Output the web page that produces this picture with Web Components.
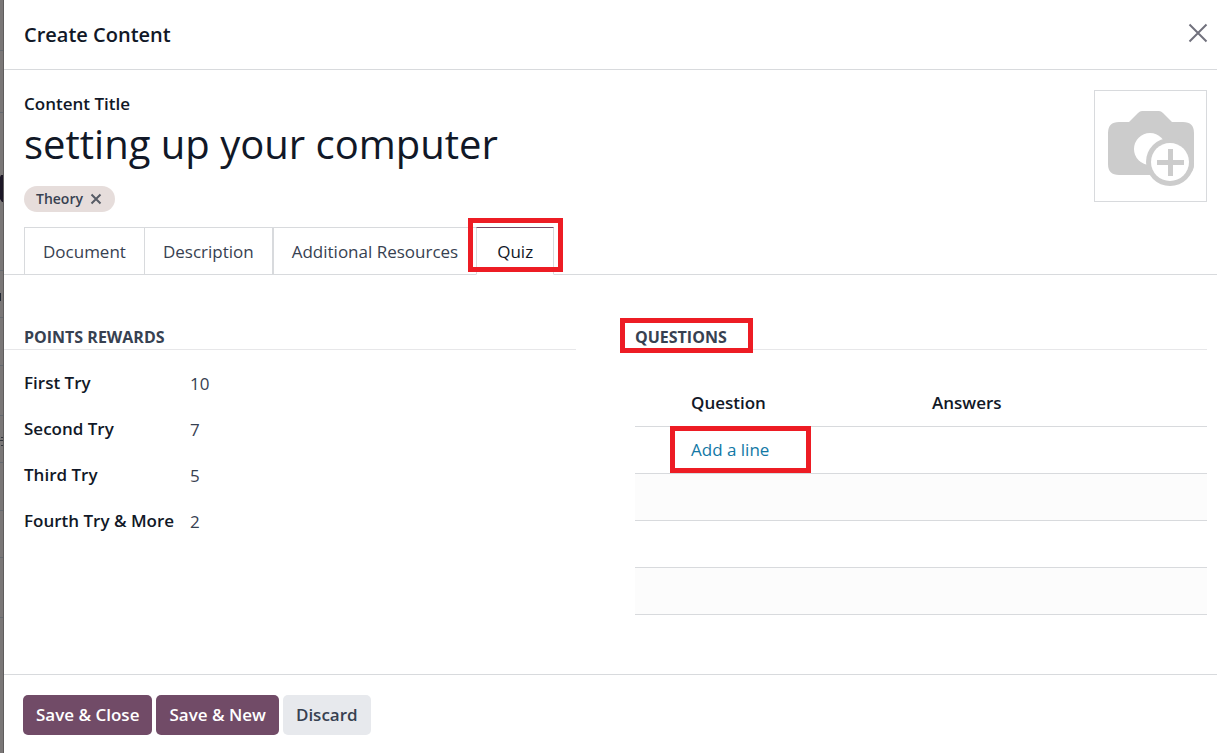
<!DOCTYPE html>
<html lang="en">
<head>
<meta charset="utf-8">
<meta name="viewport" content="width=device-width, initial-scale=1">
<title>Create Content</title>
<style>
  :root{
    --ink: #111827;
    --text: #374151;
    --line: #d8dadd;
    --brand: #714b67;
    --link: #1278a5;
    --mark: #ed1c24;
  }
  body{
    margin: 0;
    background-color: #7a7777;
    color: var(--text);
    font-family: "Open Sans", "Noto Sans", sans-serif;
    font-size: 17px;
    line-height: 24px;
  }
</style>
</head>
<body>
<page-backdrop></page-backdrop>
<content-dialog heading="Create Content">
  <content-summary></content-summary>
  <content-tabs></content-tabs>
  <field-group slot="groups" heading="Points Rewards" class="rewards">
    <score-field label="First Try" value="10"></score-field>
    <score-field label="Second Try" value="7"></score-field>
    <score-field label="Third Try" value="5"></score-field>
    <score-field label="Fourth Try &amp; More" value="2"></score-field>
  </field-group>
  <field-group slot="groups" heading="Questions" marked>
    <question-table></question-table>
  </field-group>
  <action-button slot="footer" primary>Save &amp; Close</action-button>
  <action-button slot="footer" primary>Save &amp; New</action-button>
  <action-button slot="footer">Discard</action-button>
</content-dialog>

<script>
// red frame drawn around whatever is slotted in
class MarkBox extends HTMLElement{
  constructor(){
    super();
    this.attachShadow({mode: 'open'});
  }
  static get styles(){
    return /* css */ `
      :host{
        display: inline-block;
        position: relative;
      }

      .frame{
        position: absolute;
        inset: var(--mark-inset, -8px);
        border: 5px solid var(--mark);
        pointer-events: none;
        z-index: 2;
      }
    `
  }
  connectedCallback(){
    this.shadowRoot.innerHTML = /* html */ `
    <style>${MarkBox.styles}</style>
    <slot></slot><div class="frame"></div>
    `
  }
}
customElements.define('mark-box', MarkBox);

// the dimmed page that shows at the left of the dialog
class PageBackdrop extends HTMLElement{
  constructor(){
    super();
    this.attachShadow({mode: 'open'});
  }
  static get styles(){
    return /* css */ `
      :host{
        position: absolute;
        top: 0;
        left: 0;
        width: 4px;
        height: 100%;
        overflow: hidden;
        background-color: #7a7777;
        border-right: 1px solid #5f5d5d;
        box-sizing: border-box;
      }

      svg{
        display: block;
      }
    `
  }
  connectedCallback(){
    this.shadowRoot.innerHTML = /* html */ `
    <style>${PageBackdrop.styles}</style>
    <svg width="4" height="753" viewBox="0 0 4 753" aria-hidden="true">
      <path d="M0 50.5h4M0 112.5h4M0 270.5h4M0 317.5h4M0 365.5h4M0 415.5h4M0 462.5h4M0 510.5h4M0 557.5h4M0 617.5h4" stroke="#656a70"/>
      <path d="M0 177l1-2h3v27h-2l-2-3z" fill="#1c1726"/>
      <path d="M0 293h1v8h-1zM3 294h1v2h-1zM3 299h1v2h-1z" fill="#232833"/>
      <path d="M0 440.5h3M1 437.5h2M1 445.5h3" stroke="#30343c"/>
    </svg>
    `
  }
}
customElements.define('page-backdrop', PageBackdrop);

class ContentDialog extends HTMLElement{
  constructor(){
    super();
    this.attachShadow({mode: 'open'});
  }
  static get styles(){
    return /* css */ `
      :host{
        display: flex;
        flex-direction: column;
        min-height: 100vh;
        margin-left: 4px;
        background-color: #fff;
      }

      header{
        display: flex;
        justify-content: space-between;
        align-items: flex-start;
        padding: 20px 8px 20px 20px;
        border-bottom: 1px solid var(--line);
      }

      h1{
        margin: 0;
        font-size: 20px;
        font-weight: 600;
        line-height: 29px;
        color: var(--ink);
      }

      .close{
        display: flex;
        align-items: center;
        height: 26px;
        padding: 0;
        border: 0;
        background: none;
        cursor: pointer;
      }

      main{
        flex: 1;
      }

      .groups{
        display: grid;
        grid-template-columns: 1fr 1fr;
        column-gap: 59px;
        margin-top: 50px;
        padding: 0 10px 24px 0;
      }

      footer{
        display: flex;
        gap: 4px;
        padding: 20px 19px 18px;
        border-top: 1px solid var(--line);
      }
    `
  }
  connectedCallback(){
    this.shadowRoot.innerHTML = /* html */ `
    <style>${ContentDialog.styles}</style>
    <header>
      <h1>${this.getAttribute('heading')}</h1>
      <button class="close" aria-label="Close">
        <svg width="22" height="22" viewBox="0 0 22 22"><path d="M2.5 2.5l17 17M19.5 2.5l-17 17" stroke="#71717d" stroke-width="2"/></svg>
      </button>
    </header>
    <main>
      <slot></slot>
      <div class="groups"><slot name="groups"></slot></div>
    </main>
    <footer><slot name="footer"></slot></footer>
    `
  }
}
customElements.define('content-dialog', ContentDialog);

class ContentSummary extends HTMLElement{
  constructor(){
    super();
    this.attachShadow({mode: 'open'});
  }
  static get styles(){
    return /* css */ `
      :host{
        display: flex;
        justify-content: space-between;
        align-items: flex-start;
        padding: 20px 10px 15px 20px;
      }

      .title{
        flex: 1;
      }

      label{
        display: block;
        font-weight: 600;
        line-height: 27px;
        color: var(--ink);
      }

      input{
        display: block;
        width: 100%;
        height: 53px;
        padding: 0;
        border: 0;
        outline: 0;
        background: none;
        font-family: inherit;
        font-size: 40px;
        color: var(--ink);
      }

      .tag{
        display: inline-flex;
        align-items: center;
        gap: 7px;
        height: 26px;
        margin-top: 16px;
        padding: 0 13px 0 12px;
        border-radius: 13px;
        background-color: #e6dddb;
        font-size: 14px;
        font-weight: 600;
        vertical-align: top;
      }

      button{
        padding: 0;
        border: 0;
        background: none;
        cursor: pointer;
      }

      .tag button{
        display: flex;
      }

      .picture{
        display: flex;
        align-items: center;
        justify-content: center;
        width: 113px;
        height: 112px;
        border: 1px solid var(--line);
      }
    `
  }
  connectedCallback(){
    this.shadowRoot.innerHTML = /* html */ `
    <style>${ContentSummary.styles}</style>
    <div class="title">
      <label for="name">Content Title</label>
      <input id="name" value="setting up your computer" spellcheck="false">
      <span class="tag">Theory
        <button aria-label="Delete">
          <svg width="12" height="12" viewBox="0 0 12 12"><path d="M1.5 1.5l9 9M10.5 1.5l-9 9" stroke="#575c66" stroke-width="2"/></svg>
        </button>
      </span>
    </div>
    <button class="picture" aria-label="Upload image">
      <svg width="88" height="80" viewBox="0 -3 88 80">
        <path d="M22 13l9-9q2-2 4-2h17q2 0 4 2l9 9h11q11 0 11 11v31q0 11-11 11H12Q1 66 1 55V24q0-11 11-11z" fill="#ccc"/>
        <circle cx="43" cy="40" r="16" fill="#fff"/>
        <circle cx="63" cy="53" r="24" fill="#ccc"/>
        <circle cx="63" cy="53" r="19" fill="#fff"/>
        <path d="M50 53.5h27M63.5 40v27" stroke="#ccc" stroke-width="5"/>
      </svg>
    </button>
    `
  }
}
customElements.define('content-summary', ContentSummary);

class ContentTabs extends HTMLElement{
  constructor(){
    super();
    this.attachShadow({mode: 'open'});
  }
  static get styles(){
    return /* css */ `
      :host{
        display: block;
        padding-left: 20px;
        border-bottom: 1px solid var(--line);
      }

      nav{
        display: flex;
        margin-bottom: -1px;
      }

      a{
        display: block;
        padding: 12px 18px 10px;
        border: 1px solid var(--line);
        margin-right: -1px;
        color: var(--text);
        text-decoration: none;
      }

      .second{
        margin-right: 0;
      }

      .last{
        border-right: 0;
        margin-right: 0;
      }

      .active{
        margin-right: 0;
        padding: 12px 20px 10px;
        border-top-color: var(--brand);
        border-bottom-color: #fff;
        color: var(--ink);
      }

      mark-box{
        --mark-inset: -9px -9px 3px -8px;
      }
    `
  }
  connectedCallback(){
    this.shadowRoot.innerHTML = /* html */ `
    <style>${ContentTabs.styles}</style>
    <nav>
      <a href="#document">Document</a>
      <a href="#description" class="second">Description</a>
      <a href="#resources" class="last">Additional Resources</a>
      <mark-box><a href="#quiz" class="active" aria-current="true">Quiz</a></mark-box>
    </nav>
    `
  }
}
customElements.define('content-tabs', ContentTabs);

class FieldGroup extends HTMLElement{
  constructor(){
    super();
    this.attachShadow({mode: 'open'});
  }
  static get styles(){
    return /* css */ `
      :host{
        display: block;
      }

      h2{
        margin: 0;
        border-bottom: 1px solid #e7e7e9;
        font-size: 16px;
        font-weight: 700;
        line-height: 24px;
        text-transform: uppercase;
      }

      :host(.rewards) h2,
      :host(.rewards) .content{
        padding-left: 20px;
      }

      .content{
        padding-top: 10px;
      }

      mark-box{
        --mark-inset: -7px -26px -4px -15px;
      }
    `
  }
  connectedCallback(){
    const heading = this.getAttribute('heading');
    this.shadowRoot.innerHTML = /* html */ `
    <style>${FieldGroup.styles}</style>
    <h2>${this.hasAttribute('marked') ? `<mark-box>${heading}</mark-box>` : heading}</h2>
    <div class="content"><slot></slot></div>
    `
  }
}
customElements.define('field-group', FieldGroup);

class ScoreField extends HTMLElement{
  constructor(){
    super();
    this.attachShadow({mode: 'open'});
  }
  static get styles(){
    return /* css */ `
      :host{
        display: grid;
        grid-template-columns: 166px 1fr;
        align-items: center;
        height: 46px;
      }

      label{
        font-weight: 600;
        color: var(--ink);
        white-space: nowrap;
      }

      input{
        min-width: 0;
        padding: 2px 0 0;
        border: 0;
        outline: 0;
        background: none;
        font: inherit;
        color: inherit;
      }
    `
  }
  connectedCallback(){
    this.shadowRoot.innerHTML = /* html */ `
    <style>${ScoreField.styles}</style>
    <label for="score">${this.getAttribute('label')}</label>
    <input id="score" inputmode="numeric" value="${this.getAttribute('value')}">
    `
  }
}
customElements.define('score-field', ScoreField);

class QuestionTable extends HTMLElement{
  constructor(){
    super();
    this.attachShadow({mode: 'open'});
  }
  static get styles(){
    return /* css */ `
      :host{
        display: block;
        padding-top: 20px;
      }

      table{
        width: 100%;
        border-collapse: collapse;
        table-layout: fixed;
      }

      th, td{
        height: 46px;
        padding: 0 20px;
        border-bottom: 1px solid var(--line);
        text-align: left;
      }

      th{
        font-weight: 600;
        color: var(--ink);
      }

      .handle{
        width: 36px;
        padding: 0;
      }

      .question{
        width: 201px;
      }

      tbody tr:nth-child(even){
        background-color: #fcfcfc;
      }

      a{
        color: var(--link);
        text-decoration: none;
      }

      mark-box{
        --mark-inset: -12px -42px -11px -21px;
      }
    `
  }
  connectedCallback(){
    const blank = '<tr><td class="handle"></td><td></td><td></td></tr>';
    this.shadowRoot.innerHTML = /* html */ `
    <style>${QuestionTable.styles}</style>
    <table>
      <thead>
        <tr><th class="handle"></th><th class="question">Question</th><th>Answers</th></tr>
      </thead>
      <tbody>
        <tr><td class="handle"></td><td><mark-box><a href="#add">Add a line</a></mark-box></td><td></td></tr>
        ${blank.repeat(3)}
      </tbody>
    </table>
    `
  }
}
customElements.define('question-table', QuestionTable);

class ActionButton extends HTMLElement{
  constructor(){
    super();
    this.attachShadow({mode: 'open'});
  }
  static get styles(){
    return /* css */ `
      :host{
        display: block;
      }

      button{
        height: 40px;
        padding: 0 13px;
        border: 0;
        border-radius: 5px;
        background-color: #e7e9ed;
        color: var(--text);
        font: inherit;
        font-weight: 600;
        cursor: pointer;
      }

      :host([primary]) button{
        background-color: var(--brand);
        color: #fff;
      }
    `
  }
  connectedCallback(){
    this.shadowRoot.innerHTML = /* html */ `
    <style>${ActionButton.styles}</style>
    <button><slot></slot></button>
    `
  }
}
customElements.define('action-button', ActionButton);
</script>
</body>
</html>
